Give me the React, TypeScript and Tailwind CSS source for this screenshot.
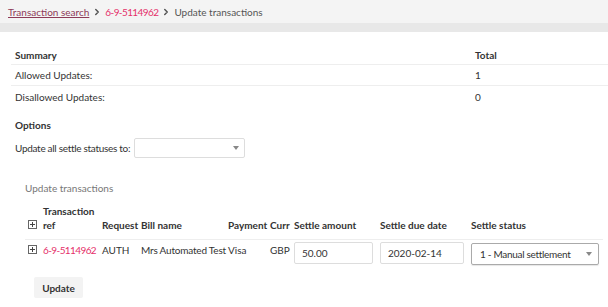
import { ChevronRight } from 'lucide-react';

const PlusBox = () => (
  <svg width="9" height="9" viewBox="0 0 9 9" className="shrink-0">
    <rect x="0.5" y="0.5" width="8" height="8" fill="white" stroke="#666" />
    <path d="M2 4.5h5M4.5 2v5" stroke="#444" strokeWidth="1" />
  </svg>
);

const Caret = () => (
  <svg width="6" height="4" viewBox="0 0 6 4">
    <path d="M0 0h6L3 4z" fill="#888" />
  </svg>
);

export default function App() {
  const rows = [
    { label: 'Allowed Updates:', total: '1' },
    { label: 'Disallowed Updates:', total: '0' },
  ];

  return (
    <div className="min-h-screen bg-white font-['Lato','Liberation_Sans',sans-serif] text-[10px] leading-[14px] text-[#333] whitespace-nowrap">
      <nav className="h-[23px] bg-[#f4f4f4] flex items-center pl-[8px] gap-[2px]">
        <a className="text-[#8e3a58] underline">Transaction search</a>
        <ChevronRight className="w-[10px] h-[10px] mx-[1px] text-[#555]" strokeWidth={3.5} />
        <a className="text-[#e5306a] tracking-[-0.6px]">6-9-5114962</a>
        <ChevronRight className="w-[10px] h-[10px] mx-[1px] text-[#555]" strokeWidth={3.5} />
        <span className="text-[#555]">Update transactions</span>
      </nav>
      <div className="h-[9px] bg-[#e8e8e8]" />

      <div className="pl-[11px] pt-[13px]">
        <div className="grid grid-cols-[464px_1fr]">
          <div className="font-bold pl-[4px] h-[20px] flex items-center border-b border-[#eee]">Summary</div>
          <div className="font-bold h-[20px] flex items-center border-b border-[#eee]">Total</div>
          {rows.map((r, i) => (
            <div key={r.label} className="contents">
              <div className={`pl-[4px] h-[21px] flex items-center ${i === 0 ? 'border-b border-[#eee]' : ''}`}>{r.label}</div>
              <div className={`h-[21px] flex items-center ${i === 0 ? 'border-b border-[#eee]' : ''}`}>{r.total}</div>
            </div>
          ))}
        </div>

        <div className="pl-[4px] mt-[11px] font-bold">Options</div>
        <div className="pl-[4px] mt-[6px] flex items-center gap-[4px]">
          <span className="tracking-[-0.3px]">Update all settle statuses to:</span>
          <div className="w-[111px] h-[20px] border border-[#ddd] rounded-[2px] flex items-center justify-end pr-[5px]">
            <Caret />
          </div>
        </div>

        <div className="pl-[14px] mt-[23px] text-[#777]">Update transactions</div>

        <div className="ml-[14px] mr-[5px] mt-[9px]">
          <div className="grid grid-cols-[18px_59px_39px_87px_42px_24px_86px_91px_1fr] items-end font-bold border-b border-[#eee] pb-[7px]">
            <div className="pl-[3px] pb-[3px]"><PlusBox /></div>
            <div>Transaction<br />ref</div>
            <div>Request</div>
            <div>Bill name</div>
            <div>Payment</div>
            <div>Curr</div>
            <div>Settle amount</div>
            <div>Settle due date</div>
            <div>Settle status</div>
          </div>
          <div className="grid grid-cols-[18px_59px_39px_87px_42px_24px_86px_91px_1fr] items-start pt-[2px]">
            <div className="pl-[3px] pt-[3px]"><PlusBox /></div>
            <div className="pt-[1px] text-[#e5306a] tracking-[-0.6px]">6-9-5114962</div>
            <div className="pt-[1px]">AUTH</div>
            <div className="pt-[1px] tracking-[-0.2px]">Mrs Automated Test</div>
            <div className="pt-[1px]">Visa</div>
            <div className="pt-[1px]">GBP</div>
            <div className="w-[79px] h-[22px] border border-[#ddd] rounded-[2px] flex items-center pl-[7px]">50.00</div>
            <div className="w-[84px] h-[22px] border border-[#ddd] rounded-[2px] flex items-center pl-[7px]">2020-02-14</div>
            <div className="w-[128px] h-[22px] mt-[1px] border border-[#aaa] rounded-[2px] flex items-center justify-between pl-[8px] pr-[6px] shadow-[0_1px_1px_rgba(0,0,0,0.1)]">
              <span className="tracking-[-0.3px]">1 - Manual settlement</span>
              <Caret />
            </div>
          </div>
        </div>

        <button className="ml-[23px] mt-[12px] w-[49px] h-[21px] bg-[#f3f3f3] rounded-[2px] font-bold text-[#333]">Update</button>
      </div>
    </div>
  );
}
